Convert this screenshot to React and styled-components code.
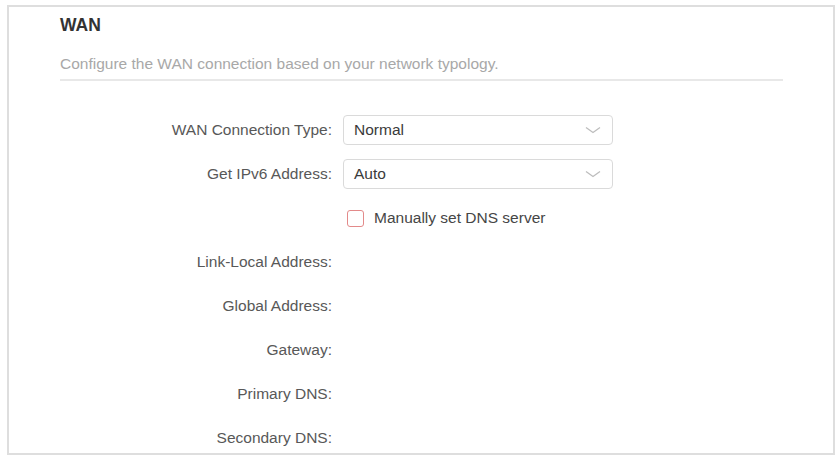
import React from "react";
import styled, { createGlobalStyle } from "styled-components";

const Global = createGlobalStyle`
  html, body { margin: 0; padding: 0; background: #ffffff; }
  body { font-family: "Liberation Sans", Arial, sans-serif; }
  * { box-sizing: border-box; }
`;

const Page = styled.div`
  padding: 5px 4px 0 7px;
  width: 839px;
  height: 460px;
  overflow: hidden;
`;

const Card = styled.section`
  width: 828px;
  height: 450px;
  border: 2px solid #dedede;
  padding: 6px 50px 0 51px;
  overflow: hidden;
`;

const Title = styled.h2`
  margin: 0;
  font-size: 17.5px;
  line-height: 24px;
  font-weight: 700;
  color: #333333;
`;

const Description = styled.p`
  margin: 17px 0 0;
  font-size: 15.5px;
  line-height: 20px;
  color: #a8a8a8;
  padding-bottom: 5px;
  border-bottom: 2px solid #e8e8e8;
`;

const Form = styled.div`
  margin-top: 34px;
  display: grid;
  grid-template-columns: 272px 270px;
  column-gap: 11px;
  row-gap: 14px;
  grid-template-rows: 30px 30px 30px repeat(5, 30px);
  align-items: center;
`;

const Label = styled.div`
  text-align: right;
  font-size: 15.5px;
  color: #585858;
  white-space: nowrap;
`;

const SelectBox = styled.div`
  height: 30px;
  width: 270px;
  border: 1px solid #dadada;
  border-radius: 4px;
  display: flex;
  align-items: center;
  justify-content: space-between;
  padding: 0 11px 0 10px;
  font-size: 15.5px;
  color: #3a3a3a;
`;

const Chevron = styled.svg`
  width: 16px;
  height: 8px;
  display: block;
`;

const CheckRow = styled.label`
  display: flex;
  align-items: center;
  gap: 10px;
  padding-left: 4px;
  font-size: 15.5px;
  color: #464646;
`;

const Box = styled.span`
  width: 17px;
  height: 17px;
  border: 1.5px solid #e38a8a;
  border-radius: 3px;
  display: inline-block;
`;

const Empty = styled.div``;

const Select = ({ value }) => (
  <SelectBox>
    <span>{value}</span>
    <Chevron viewBox="0 0 16 8">
      <polyline points="1,1.5 8,6.5 15,1.5" fill="none" stroke="#bdbdbd" strokeWidth="1.3" />
    </Chevron>
  </SelectBox>
);

const fields = [
  "Link-Local Address:",
  "Global Address:",
  "Gateway:",
  "Primary DNS:",
  "Secondary DNS:",
];

export default function App() {
  return (
    <>
      <Global />
      <Page>
        <Card>
          <Title>WAN</Title>
          <Description>Configure the WAN connection based on your network typology.</Description>
          <Form>
            <Label>WAN Connection Type:</Label>
            <Select value="Normal" />
            <Label>Get IPv6 Address:</Label>
            <Select value="Auto" />
            <Empty />
            <CheckRow>
              <Box />
              Manually set DNS server
            </CheckRow>
            {fields.map((f) => (
              <React.Fragment key={f}>
                <Label>{f}</Label>
                <Empty />
              </React.Fragment>
            ))}
          </Form>
        </Card>
      </Page>
    </>
  );
}
